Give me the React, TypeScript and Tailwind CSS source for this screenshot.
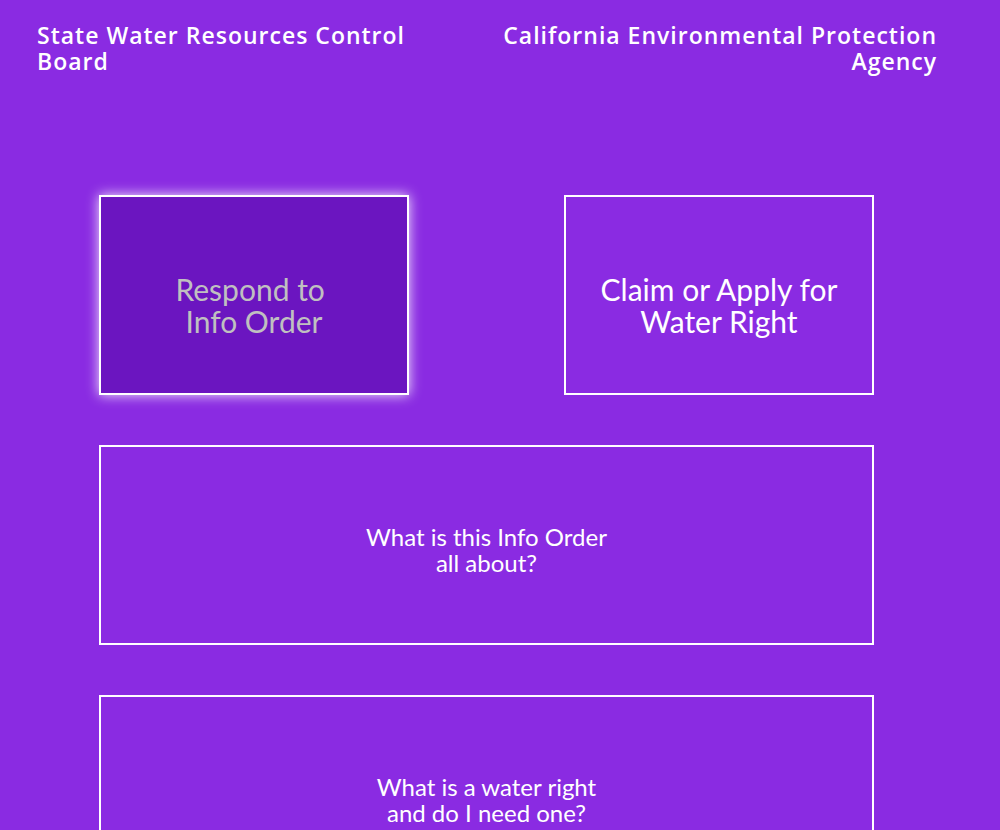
import React from "react";

export default function App() {
  return (
    <div className="min-h-[830px] w-full bg-[#8a2be2] overflow-hidden">
      <header
        className="flex w-[900px] ml-[37px] pt-[22px] text-white text-[23px] leading-[26px] font-semibold tracking-[1px]"
        style={{ fontFamily: '"Open Sans", "Liberation Sans", sans-serif' }}
      >
        <div className="w-1/2 text-left">
          State Water Resources Control
          <br />
          Board
        </div>
        <div className="w-1/2 text-right">
          California Environmental Protection
          <br />
          Agency
        </div>
      </header>

      <main
        className="w-[775px] ml-[99px] mt-[121px] flex flex-col gap-[50px]"
        style={{ fontFamily: 'Lato, "Open Sans", sans-serif' }}
      >
        <div className="flex justify-between">
          <div className="w-[310px] h-[200px] border-2 border-white bg-[#6b15c0] shadow-[0_0_12px_rgba(255,255,255,0.9)] flex items-center justify-center text-center text-[#c0c0c0] text-[30px] leading-[32px] pt-[20px]">
            <span>
              Respond to&nbsp;
              <br />
              Info Order
            </span>
          </div>
          <div className="w-[310px] h-[200px] border-2 border-white flex items-center justify-center text-center text-white text-[30px] leading-[32px] pt-[20px]">
            <span>
              Claim or Apply for
              <br />
              Water Right
            </span>
          </div>
        </div>
        <div className="w-[775px] h-[200px] border-2 border-white flex items-center justify-center text-center text-white text-[24px] leading-[26px] pt-[10px]">
          <span>
            What is this Info Order
            <br />
            all about?
          </span>
        </div>
        <div className="w-[775px] h-[200px] border-2 border-white flex items-center justify-center text-center text-white text-[24px] leading-[26px] pt-[10px]">
          <span>
            What is a water right
            <br />
            and do I need one?
          </span>
        </div>
      </main>
    </div>
  );
}
